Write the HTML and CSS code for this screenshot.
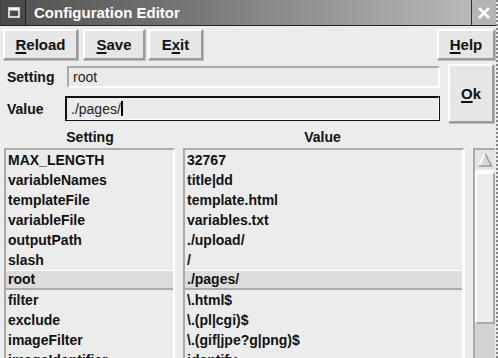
FILE: index.html
```html
<!DOCTYPE html>
<html lang="en">
<head>
  <meta charset="UTF-8">
  <title>Configuration Editor</title>
  <link rel="stylesheet" href="styles.css">
</head>
<body>

<div class="window">
  <div class="titlebar">
    <div class="tb-icon">
      <svg width="12" height="11" viewBox="0 0 12 11"><rect x="1" y="1" width="10" height="9" fill="none" stroke="#fff" stroke-width="1.5"/><rect x="1" y="1" width="10" height="2.5" fill="#fff"/></svg>
    </div>
    <div class="tb-title">Configuration Editor</div>
    <div class="tb-close">
      <svg width="14" height="14" viewBox="0 0 14 14"><path d="M2 2 L12 12 M12 2 L2 12" stroke="#fff" stroke-width="2.6"/></svg>
    </div>
  </div>

  <div class="toolbar">
    <button class="btn btn-reload"><u>R</u>eload</button>
    <button class="btn btn-save"><u>S</u>ave</button>
    <button class="btn btn-exit">E<u>x</u>it</button>
    <span class="spacer"></span>
    <button class="btn btn-help"><u>H</u>elp</button>
  </div>

  <div class="form">
    <label class="lbl lbl-setting">Setting</label>
    <div class="field field-setting">root</div>
    <label class="lbl lbl-value">Value</label>
    <div class="field field-value">./pages/<span class="caret"></span></div>
    <button class="btn btn-ok"><u>O</u>k</button>
  </div>

  <div class="heads">
    <div class="head head-setting">Setting</div>
    <div class="head head-value">Value</div>
  </div>

  <div class="lists">
    <div class="list list-left">
      <div class="row">MAX_LENGTH</div>
      <div class="row">variableNames</div>
      <div class="row">templateFile</div>
      <div class="row">variableFile</div>
      <div class="row">outputPath</div>
      <div class="row">slash</div>
      <div class="row sel">root</div>
      <div class="row">filter</div>
      <div class="row">exclude</div>
      <div class="row">imageFilter</div>
      <div class="row">imageIdentifier</div>
    </div>
    <div class="list list-right">
      <div class="row">32767</div>
      <div class="row">title|dd</div>
      <div class="row">template.html</div>
      <div class="row">variables.txt</div>
      <div class="row">./upload/</div>
      <div class="row">/</div>
      <div class="row sel">./pages/</div>
      <div class="row">\.html$</div>
      <div class="row">\.(pl|cgi)$</div>
      <div class="row">\.(gif|jpe?g|png)$</div>
      <div class="row">identify</div>
    </div>
    <div class="scrollbar">
      <div class="sb-arrow">
        <svg width="16" height="16" viewBox="0 0 16 16"><path d="M8 1.5 L14.5 14 L1.5 14 Z" fill="#d8d8d8"/><path d="M1.5 14 L8 1.5" stroke="#fff" stroke-width="2"/><path d="M8 1.5 L14.5 14 L1.5 14" fill="none" stroke="#999" stroke-width="1.5"/></svg>
      </div>
      <div class="sb-thumb"></div>
      <div class="sb-trough"></div>
    </div>
  </div>
</div>

</body>
</html>
```

FILE: styles.css
```css
body {
  margin: 0;
  font-family: "Liberation Sans", Arial, sans-serif;
  font-size: 14px;
  font-weight: bold;
  color: #111;
}

.window {
  width: 498px;
  height: 358px;
  overflow: hidden;
  background-color: #ececec;
  box-sizing: border-box;
  border-right: 2px dotted #888;
}

/* title bar */
.titlebar {
  display: flex;
  height: 25px;
  border-bottom: 1px solid #222;
  background: #444;
}

.tb-icon {
  width: 23px;
  margin-left: 2px;
  display: flex;
  align-items: center;
  justify-content: center;
  background: #4c4c4c;
  border-right: 1px solid #222;
}

.tb-title {
  flex: 1;
  background: linear-gradient(to right, #555 0%, #7a7a7a 40%, #b8b8b8 100%);
  color: #fff;
  font-size: 15px;
  line-height: 25px;
  padding-left: 8px;
  border-right: 1px solid #333;
}

.tb-close {
  width: 24px;
  display: flex;
  align-items: center;
  justify-content: center;
  background: #b4b4b4;
}

/* buttons */
.btn {
  font-family: inherit;
  font-size: 15px;
  font-weight: bold;
  color: #111;
  background: #e6e6e6;
  border: 2px solid;
  border-color: #fff #999 #999 #fff;
  box-shadow: 1px 1px 0 #bbb;
  padding: 0;
  height: 31px;
}

.btn u {
  text-decoration-thickness: 2px;
  text-underline-offset: 2px;
}

.toolbar {
  display: flex;
  margin: 3px 0 0 3px;
  height: 31px;
}

.btn-reload { width: 75px; }
.btn-save { width: 62px; margin-left: 5px; }
.btn-exit { width: 55px; margin-left: 3px; }
.spacer { flex: 1; }
.btn-help { width: 58px; margin-right: 1px; }

/* setting / value form */
.form {
  display: grid;
  grid-template-columns: 53px 373px 47px;
  grid-template-rows: 22px 25px;
  row-gap: 8px;
  column-gap: 7px;
  margin: 6px 0 0 7px;
  align-items: center;
}

.lbl {
  font-size: 14px;
}

.field {
  font-weight: normal;
  font-size: 14px;
  height: 100%;
  box-sizing: border-box;
  display: flex;
  align-items: center;
  padding-left: 4px;
  background: #ebebeb;
}

.field-setting {
  border: 2px solid;
  border-color: #aaa #fff #fff #aaa;
  color: #222;
}

.field-value {
  border: 2px solid #111;
  border-bottom-color: #fff;
  border-right-color: #fff;
  outline: 1px solid #111;
  outline-offset: -1px;
  margin-left: -2px;
  color: #222;
}

.caret {
  display: inline-block;
  width: 2px;
  height: 15px;
  background: #000;
}

.btn-ok {
  grid-column: 3;
  grid-row: 1 / span 2;
  height: 59px;
  align-self: start;
  margin-top: -2px;
  margin-left: 1px;
}

/* list headers */
.heads {
  display: flex;
  margin-top: 6px;
  height: 20px;
  align-items: center;
}

.head-setting {
  width: 180px;
  text-align: center;
}

.head-value {
  width: 285px;
  text-align: center;
}

/* lists */
.lists {
  display: flex;
  margin-top: 1px;
  height: 222px;
}

.list {
  box-sizing: border-box;
  border: 2px solid;
  border-color: #aaa #fff #fff #aaa;
  overflow: hidden;
}

.list-left {
  width: 171px;
  margin-left: 4px;
}

.list-right {
  width: 282px;
  margin-left: 8px;
  border-right-width: 3px;
}

.row {
  height: 20px;
  line-height: 20px;
  padding-left: 2px;
  white-space: nowrap;
  box-sizing: border-box;
}

.row.sel {
  background: #dcdcdc;
  border-top: 1px solid #fff;
  border-bottom: 2px solid #aaa;
  line-height: 17px;
}

/* scrollbar */
.scrollbar {
  width: 20px;
  margin-left: 8px;
  display: flex;
  flex-direction: column;
  border-left: 2px solid #aaa;
  border-top: 2px solid #aaa;
}

.sb-arrow {
  height: 20px;
  display: flex;
  justify-content: center;
  align-items: center;
  background: #e4e4e4;
  border-bottom: 2px solid #fff;
}

.sb-thumb {
  height: 152px;
  background: #ececec;
  border: 2px solid;
  border-color: #fff #aaa #aaa #fff;
  box-sizing: border-box;
}

.sb-trough {
  flex: 1;
  background: #d2d2d2;
}
```
